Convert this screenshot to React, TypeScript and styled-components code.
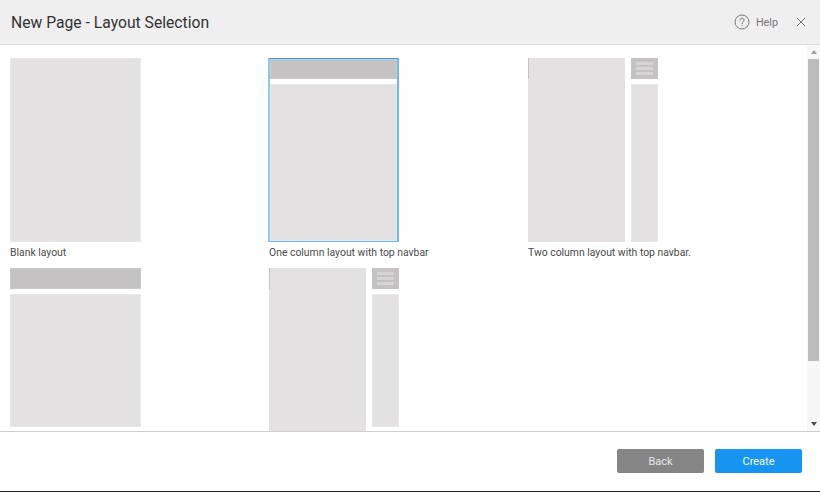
import React from 'react';
import styled, { createGlobalStyle } from 'styled-components';

const GlobalStyle = createGlobalStyle`
  html, body {
    margin: 0;
    padding: 0;
    background: #fff;
  }
  * {
    box-sizing: border-box;
  }
`;

const Dialog = styled.div`
  display: flex;
  flex-direction: column;
  width: 820px;
  height: 492px;
  overflow: hidden;
  font-family: Roboto, "Liberation Sans", sans-serif;
  border-bottom: 1px solid #222;
`;

const Header = styled.header`
  display: flex;
  align-items: center;
  justify-content: space-between;
  flex: 0 0 45px;
  padding: 0 14px 0 11px;
  background: #efefef;
  border-bottom: 1px solid #dedede;
`;

const Title = styled.h1`
  margin: 0;
  font-size: 15.7px;
  font-weight: 400;
  color: #333;
`;

const HeaderActions = styled.div`
  display: flex;
  align-items: center;
`;

const HelpLabel = styled.span`
  margin: 0 18px 0 6px;
  font-size: 10.8px;
  color: #777;
`;

const Body = styled.div`
  display: flex;
  flex: 1;
  min-height: 0;
  border-bottom: 1px solid #cfcfcf;
`;

const Gallery = styled.div`
  display: grid;
  grid-template-columns: repeat(3, 259px);
  grid-auto-rows: 210px;
  flex: 1;
  min-width: 0;
  padding: 13px 0 0 10px;
  overflow: hidden;
`;

const Card = styled.div`
  display: flex;
  flex-direction: column;
  align-items: flex-start;
`;

const Preview = styled.div<{ $tall?: boolean }>`
  display: flex;
  flex-direction: column;
  flex: none;
  width: 131px;
  height: ${(p) => (p.$tall ? '184px' : '159px')};
`;

const SelectedPreview = styled(Preview)`
  width: 131px;
  margin-left: -1px;
  border-top: 1px solid #3399ee;
  border-left: 2px solid #8ccaf6;
  border-right: 2px solid #6db9f3;
  border-bottom: 1px solid #6db9f3;
`;

const Fill = styled.div`
  flex: 1;
  min-height: 0;
  background: #e3e1e2;
  border: 1px solid #e9e8e8;
`;

const Navbar = styled.div<{ $short?: boolean }>`
  flex: 0 0 ${(p) => (p.$short ? '20px' : '21px')};
  margin-bottom: 5px;
  background: #c4c2c2;
  border: 1px solid #cbc9c9;
`;

const Columns = styled.div`
  display: flex;
  gap: 6px;
  flex: 1;
  width: 130px;
  height: 100%;
`;

const MainColumn = styled.div<{ $overflow?: boolean }>`
  position: relative;
  width: 97px;
  height: ${(p) => (p.$overflow ? '190px' : '100%')};
  flex: none;
  background: #e3e1e2;
  &::before {
    content: '';
    position: absolute;
    top: 0;
    left: 0;
    width: 1px;
    height: 21px;
    background: #c4c2c2;
  }
`;

const SideColumn = styled.div`
  display: flex;
  flex-direction: column;
  width: 27px;
  flex: none;
`;

const SideMenu = styled.div`
  display: flex;
  flex-direction: column;
  justify-content: center;
  gap: 2px;
  flex: 0 0 21px;
  margin-bottom: 5px;
  padding: 0 5px;
  background: #c4c2c2;
`;

const MenuLine = styled.span`
  display: block;
  height: 3px;
  background: #d6d4d4;
`;

const CardLabel = styled.div`
  margin-top: 4px;
  font-size: 10.4px;
  line-height: 14px;
  color: #4a4a4a;
  white-space: nowrap;
`;

const Scrollbar = styled.div`
  display: flex;
  flex-direction: column;
  align-items: center;
  flex: 0 0 13px;
  background: #f7f7f7;
`;

const ScrollArrow = styled.div<{ $down?: boolean }>`
  flex: 0 0 14px;
  display: flex;
  align-items: center;
  justify-content: center;
  &::after {
    content: '';
    width: 0;
    height: 0;
    border-left: 3.5px solid transparent;
    border-right: 3.5px solid transparent;
    ${(p) => (p.$down ? 'border-top: 4px solid #505050;' : 'border-bottom: 4px solid #a3a3a3;')}
  }
`;

const ScrollTrack = styled.div`
  flex: 1;
  width: 100%;
  padding: 0 1px;
`;

const ScrollThumb = styled.div`
  width: 100%;
  height: 302px;
  background: #bcbcbc;
`;

const Footer = styled.footer`
  display: flex;
  justify-content: flex-end;
  align-items: flex-start;
  gap: 11px;
  flex: 0 0 59px;
  padding: 17px 18px 0 0;
`;

const Button = styled.button<{ $primary?: boolean }>`
  width: 87px;
  height: 24px;
  padding: 0;
  font-family: inherit;
  font-size: 11px;
  color: ${(p) => (p.$primary ? '#fff' : '#e8e8e8')};
  background: ${(p) => (p.$primary ? '#1594f2' : '#858585')};
  border: none;
  border-radius: 2px;
`;

function HelpIcon() {
  return (
    <svg width="16" height="16" viewBox="0 0 16 16" fill="none" stroke="#777" strokeWidth="1">
      <circle cx="8" cy="8" r="7" />
      <path d="M5.9 6.2c0-1.2 1-2 2.1-2s2.1.8 2.1 1.9c0 1.6-2.1 1.7-2.1 3.5" strokeLinecap="round" />
      <path d="M8 11v1.2" />
    </svg>
  );
}

function CloseIcon() {
  return (
    <svg width="10" height="10" viewBox="0 0 10 10" fill="none" stroke="#777" strokeWidth="1">
      <path d="M1 1l8 8M9 1l-8 8" />
    </svg>
  );
}

function SideBar() {
  return (
    <SideColumn>
      <SideMenu>
        <MenuLine />
        <MenuLine />
        <MenuLine />
      </SideMenu>
      <Fill />
    </SideColumn>
  );
}

function App() {
  return (
    <>
      <GlobalStyle />
      <Dialog>
        <Header>
          <Title>New Page - Layout Selection</Title>
          <HeaderActions>
            <HelpIcon />
            <HelpLabel>Help</HelpLabel>
            <CloseIcon />
          </HeaderActions>
        </Header>
        <Body>
          <Gallery>
            <Card>
              <Preview $tall>
                <Fill />
              </Preview>
              <CardLabel>Blank layout</CardLabel>
            </Card>
            <Card>
              <SelectedPreview $tall>
                <Navbar $short />
                <Fill />
              </SelectedPreview>
              <CardLabel>One column layout with top navbar</CardLabel>
            </Card>
            <Card>
              <Preview $tall>
                <Columns>
                  <MainColumn />
                  <SideBar />
                </Columns>
              </Preview>
              <CardLabel>Two column layout with top navbar.</CardLabel>
            </Card>
            <Card>
              <Preview>
                <Navbar />
                <Fill />
              </Preview>
            </Card>
            <Card>
              <Preview>
                <Columns>
                  <MainColumn $overflow />
                  <SideBar />
                </Columns>
              </Preview>
            </Card>
          </Gallery>
          <Scrollbar>
            <ScrollArrow />
            <ScrollTrack>
              <ScrollThumb />
            </ScrollTrack>
            <ScrollArrow $down />
          </Scrollbar>
        </Body>
        <Footer>
          <Button>Back</Button>
          <Button $primary>Create</Button>
        </Footer>
      </Dialog>
    </>
  );
}

export default App;
